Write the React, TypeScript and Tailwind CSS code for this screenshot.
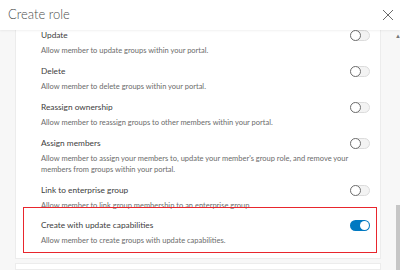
import React from "react";

const rows = [
  { title: "Update", desc: "Allow member to update groups within your portal.", on: false },
  { title: "Delete", desc: "Allow member to delete groups within your portal.", on: false },
  { title: "Reassign ownership", desc: "Allow member to reassign groups to other members within your portal.", on: false },
  {
    title: "Assign members",
    desc: "Allow member to assign your members to, update your member's group role, and remove your members from groups within your portal.",
    on: false,
  },
  { title: "Link to enterprise group", desc: "Allow member to link group membership to an enterprise group.", on: false },
];

const Toggle = ({ on }: { on: boolean }) =>
  on ? (
    <div className="w-[20px] h-[11px] rounded-full bg-[#0079c1] flex items-center justify-end pr-[1px] shrink-0">
      <div className="w-[9px] h-[9px] rounded-full bg-white" />
    </div>
  ) : (
    <div className="w-[20px] h-[11px] rounded-full bg-[#f3f3f3] border border-[#dcdcdc] flex items-center shrink-0 relative">
      <div className="w-[11px] h-[11px] -ml-[1px] rounded-full bg-white border border-[#6f6f6f]" />
    </div>
  );

const Row = ({ title, desc, on }: { title: string; desc: string; on: boolean }) => (
  <div className="flex justify-between items-start">
    <div className="flex flex-col gap-[3px] max-w-[316px]">
      <div className="text-[8.3px] leading-[13px] text-[#404040]">{title}</div>
      <div className="text-[7.5px] leading-[11px] text-[#6b6b6b]">{desc}</div>
    </div>
    <div className="mt-[1px]">
      <Toggle on={on} />
    </div>
  </div>
);

const App = () => {
  return (
    <div className="w-[400px] h-[270px] overflow-hidden bg-[#f7f7f7] flex flex-col" style={{ fontFamily: "Lato, 'Noto Sans', sans-serif" }}>
      <div className="h-[30px] shrink-0 bg-white flex items-center justify-between pl-[8px] pr-[6px] relative z-10 shadow-[0_1px_2px_rgba(0,0,0,0.06)]">
        <span className="text-[13px] font-light text-[#4c4c4c]">Create role</span>
        <svg width="12" height="12" viewBox="0 0 12 12" className="text-[#6a6a6a]">
          <path d="M1 1L11 11M11 1L1 11" stroke="currentColor" strokeWidth="1" />
        </svg>
      </div>

      <div className="flex flex-1 min-h-0 relative">
        <div className="pl-[15px] w-[381px] flex flex-col gap-[4px] -mt-[10px]">
          <div className="bg-white border-x border-b border-[#ececec] pl-[7px] pr-[3px] pb-[5px] flex flex-col">
            {rows.map((r) => (
              <div key={r.title} className="pt-[9px] pl-[18px] pr-[7px]">
                <Row {...r} />
              </div>
            ))}
            <div className="-mt-[4px] border border-[#e8262d] pt-[11px] pb-[6px] pl-[17px] pr-[6px]">
              <Row title="Create with update capabilities" desc="Allow member to create groups with update capabilities." on />
            </div>
          </div>
          <div className="bg-white border border-[#ececec] h-[20px]" />
        </div>
        <div className="flex-1 flex justify-end">
          <div className="w-[4px] flex flex-col items-center">
            <span className="text-[6px] leading-none text-[#777] mt-[3px]">▲</span>
            <div className="mt-auto w-[4px] h-[65px] bg-[#c6c6c6]" />
          </div>
        </div>
      </div>
    </div>
  );
};

export default App;
